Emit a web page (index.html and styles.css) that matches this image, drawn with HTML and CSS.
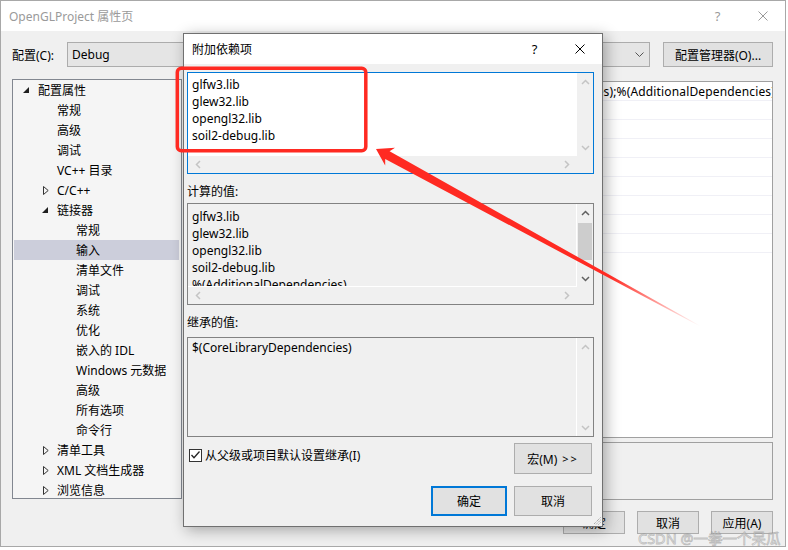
FILE: index.html
```html
<!DOCTYPE html>
<html lang="zh-CN">
<head>
    <meta charset="UTF-8">
    <meta name="viewport" content="width=device-width, initial-scale=1.0">
    <title>OpenGLProject 属性页</title>
    <link rel="stylesheet" href="styles.css">
</head>
<body>

    <div class="window">
        <div class="titlebar">
            <span class="title">OpenGLProject 属性页</span>
            <span class="cap-btn">?</span>
            <span class="cap-btn"><svg width="10" height="10" viewBox="0 0 10 10"><path d="M0.5 0.5 L9.5 9.5 M9.5 0.5 L0.5 9.5" stroke="currentColor" stroke-width="1" fill="none"/></svg></span>
        </div>

        <div class="client">
            <div class="config-row">
                <span class="config-label">配置(C):</span>
                <div class="combo">
                    <span class="combo-text">Debug</span>
                    <svg class="combo-arrow" width="9" height="5" viewBox="0 0 9 5"><polyline points="0.5,0.5 4.5,4.5 8.5,0.5" fill="none" stroke="#555" stroke-width="1"/></svg>
                </div>
                <button class="btn btn-manager">配置管理器(O)...</button>
            </div>

            <div class="main">
                <div class="tree">
                    <div class="node l0"><span class="tog open"></span>配置属性</div>
                    <div class="node l1"><span class="tog"></span>常规</div>
                    <div class="node l1"><span class="tog"></span>高级</div>
                    <div class="node l1"><span class="tog"></span>调试</div>
                    <div class="node l1"><span class="tog"></span>VC++ 目录</div>
                    <div class="node l1"><span class="tog closed"><svg width="6" height="9" viewBox="0 0 6 9"><polygon points="0.5,0.5 5.2,4.5 0.5,8.5" fill="none" stroke="#333" stroke-width="1"/></svg></span>C/C++</div>
                    <div class="node l1"><span class="tog open"></span>链接器</div>
                    <div class="node l2"><span class="tog"></span>常规</div>
                    <div class="node l2 selected"><span class="tog"></span>输入</div>
                    <div class="node l2"><span class="tog"></span>清单文件</div>
                    <div class="node l2"><span class="tog"></span>调试</div>
                    <div class="node l2"><span class="tog"></span>系统</div>
                    <div class="node l2"><span class="tog"></span>优化</div>
                    <div class="node l2"><span class="tog"></span>嵌入的 IDL</div>
                    <div class="node l2"><span class="tog"></span>Windows 元数据</div>
                    <div class="node l2"><span class="tog"></span>高级</div>
                    <div class="node l2"><span class="tog"></span>所有选项</div>
                    <div class="node l2"><span class="tog"></span>命令行</div>
                    <div class="node l1"><span class="tog closed"><svg width="6" height="9" viewBox="0 0 6 9"><polygon points="0.5,0.5 5.2,4.5 0.5,8.5" fill="none" stroke="#333" stroke-width="1"/></svg></span>清单工具</div>
                    <div class="node l1"><span class="tog closed"><svg width="6" height="9" viewBox="0 0 6 9"><polygon points="0.5,0.5 5.2,4.5 0.5,8.5" fill="none" stroke="#333" stroke-width="1"/></svg></span>XML 文档生成器</div>
                    <div class="node l1"><span class="tog closed"><svg width="6" height="9" viewBox="0 0 6 9"><polygon points="0.5,0.5 5.2,4.5 0.5,8.5" fill="none" stroke="#333" stroke-width="1"/></svg></span>浏览信息</div>
                </div>

                <div class="props">
                    <div class="grid">
                        <!-- property names sit under the dialog, only the value column shows -->
                        <div class="grid-row"><span class="prop-name"></span><span class="prop-value"><span>glfw3.lib;glew32.lib;opengl32.lib;soil2-debug.lib;$(CoreLibraryDependencies);%(AdditionalDependencies)</span></span></div>
                        <div class="grid-row"><span class="prop-name"></span><span class="prop-value"></span></div>
                        <div class="grid-row"><span class="prop-name"></span><span class="prop-value"></span></div>
                        <div class="grid-row"><span class="prop-name"></span><span class="prop-value"></span></div>
                        <div class="grid-row"><span class="prop-name"></span><span class="prop-value"></span></div>
                        <div class="grid-row"><span class="prop-name"></span><span class="prop-value"></span></div>
                        <div class="grid-row"><span class="prop-name"></span><span class="prop-value"></span></div>
                        <div class="grid-row"><span class="prop-name"></span><span class="prop-value"></span></div>
                        <div class="grid-row"><span class="prop-name"></span><span class="prop-value"></span></div>
                    </div>
                    <div class="desc"></div>
                </div>
            </div>

            <div class="footer">
                <button class="btn btn-foot">确定</button>
                <button class="btn btn-foot">取消</button>
                <button class="btn btn-foot">应用(A)</button>
            </div>
        </div>
    </div>

    <div class="dialog">
        <div class="dlg-title">
            <span class="title">附加依赖项</span>
            <span class="cap-btn">?</span>
            <span class="cap-btn"><svg width="10" height="10" viewBox="0 0 10 10"><path d="M0.5 0.5 L9.5 9.5 M9.5 0.5 L0.5 9.5" stroke="currentColor" stroke-width="1" fill="none"/></svg></span>
        </div>

        <div class="dlg-body">
            <div class="edit edit-active">
                <div class="edit-text pad-3">
                    <div>glfw3.lib</div>
                    <div>glew32.lib</div>
                    <div>opengl32.lib</div>
                    <div>soil2-debug.lib</div>
                </div>
                <div class="vscroll">
                    <span class="sb-btn"><svg width="9" height="6" viewBox="0 0 9 6"><polyline points="1,5 4.5,1.5 8,5" fill="none" stroke="#c4c4c4" stroke-width="1.5"/></svg></span>
                    <span class="sb-btn"><svg width="9" height="6" viewBox="0 0 9 6"><polyline points="1,1 4.5,4.5 8,1" fill="none" stroke="#c4c4c4" stroke-width="1.5"/></svg></span>
                </div>
                <div class="hscroll">
                    <span class="sb-btn"><svg width="6" height="9" viewBox="0 0 6 9"><polyline points="5,1 1.5,4.5 5,8" fill="none" stroke="#c4c4c4" stroke-width="1.5"/></svg></span>
                    <span class="sb-btn"><svg width="6" height="9" viewBox="0 0 6 9"><polyline points="1,1 4.5,4.5 1,8" fill="none" stroke="#c4c4c4" stroke-width="1.5"/></svg></span>
                </div>
                <div class="sb-corner"></div>
            </div>

            <div class="field-label label-computed">计算的值:</div>
            <div class="edit edit-readonly box-computed">
                <div class="edit-text pad-4">
                    <div>glfw3.lib</div>
                    <div>glew32.lib</div>
                    <div>opengl32.lib</div>
                    <div>soil2-debug.lib</div>
                    <div>%(AdditionalDependencies)</div>
                </div>
                <div class="vscroll">
                    <span class="sb-btn"><svg width="9" height="6" viewBox="0 0 9 6"><polyline points="1,5 4.5,1.5 8,5" fill="none" stroke="#606060" stroke-width="1.5"/></svg></span>
                    <span class="sb-thumb"></span>
                    <span class="sb-btn"><svg width="9" height="6" viewBox="0 0 9 6"><polyline points="1,1 4.5,4.5 8,1" fill="none" stroke="#606060" stroke-width="1.5"/></svg></span>
                </div>
                <div class="hscroll">
                    <span class="sb-btn"><svg width="6" height="9" viewBox="0 0 6 9"><polyline points="5,1 1.5,4.5 5,8" fill="none" stroke="#c4c4c4" stroke-width="1.5"/></svg></span>
                    <span class="sb-btn"><svg width="6" height="9" viewBox="0 0 6 9"><polyline points="1,1 4.5,4.5 1,8" fill="none" stroke="#c4c4c4" stroke-width="1.5"/></svg></span>
                </div>
                <div class="sb-corner"></div>
            </div>

            <div class="field-label label-inherited">继承的值:</div>
            <div class="edit edit-readonly edit-noh box-inherited">
                <div class="edit-text pad-1">
                    <div>$(CoreLibraryDependencies)</div>
                </div>
                <div class="vscroll">
                    <span class="sb-btn"><svg width="9" height="6" viewBox="0 0 9 6"><polyline points="1,5 4.5,1.5 8,5" fill="none" stroke="#c4c4c4" stroke-width="1.5"/></svg></span>
                    <span class="sb-btn"><svg width="9" height="6" viewBox="0 0 9 6"><polyline points="1,1 4.5,4.5 8,1" fill="none" stroke="#c4c4c4" stroke-width="1.5"/></svg></span>
                </div>
            </div>

            <div class="inherit-row">
                <label class="check">
                    <span class="check-box"><svg width="11" height="10" viewBox="0 0 11 10"><polyline points="1.5,5 4,7.8 9.5,1.5" fill="none" stroke="#222" stroke-width="1.3"/></svg></span>
                    从父级或项目默认设置继承(I)
                </label>
                <button class="btn btn-macro">宏(M) <span class="gt">&gt;&gt;</span></button>
            </div>

            <div class="dlg-buttons">
                <button class="btn btn-dlg btn-default">确定</button>
                <button class="btn btn-dlg">取消</button>
            </div>
        </div>

        <svg class="grip" width="8" height="8" viewBox="0 0 8 8">
            <path d="M7.5 0.5 L0.5 7.5 M7.5 3 L3 7.5 M7.5 5.5 L5.5 7.5" stroke="#8a8a8a" stroke-width="1" stroke-dasharray="1 1" fill="none"/>
        </svg>
    </div>

    <!-- annotation drawn over the screenshot -->
    <svg class="annot" width="788" height="550" viewBox="0 0 788 550">
        <defs>
            <linearGradient id="fade" gradientUnits="userSpaceOnUse" x1="376" y1="149" x2="700" y2="326">
                <stop offset="0" stop-color="#ff2a22" stop-opacity="1"/>
                <stop offset="0.72" stop-color="#ff2a22" stop-opacity="1"/>
                <stop offset="1" stop-color="#ff2a22" stop-opacity="0"/>
            </linearGradient>
        </defs>
        <rect x="177.3" y="68.3" width="188.5" height="82.5" rx="4" fill="none" stroke="#ff2a22" stroke-width="3.5"/>
        <polygon points="376,149 395,147.8 389.6,151.2 700.2,325.8 699.8,326.2 385.2,159.1 385.2,165.6" fill="url(#fade)"/>
    </svg>

    <div class="watermark">CSDN @一拳一个呆瓜</div>

</body>
</html>
```

FILE: styles.css
```css
* {
    box-sizing: border-box;
}

body {
    margin: 0;
    width: 788px;
    height: 550px;
    overflow: hidden;
    position: relative;
    background: #fff;
    font-family: "Noto Sans", "Noto Sans CJK SC", sans-serif;
    font-size: 12px;
    color: #000;
}

button {
    font-family: inherit;
    font-size: 12px;
    color: #000;
    padding: 0;
}

.btn {
    background: #e1e1e1;
    border: 1px solid #adadad;
    display: flex;
    align-items: center;
    justify-content: center;
}

/* ---------- main property window ---------- */

.window {
    width: 786px;
    height: 547px;
    border: 1px solid #a8a8a8;
    background: #f0f0f0;
    display: flex;
    flex-direction: column;
}

.titlebar {
    height: 30px;
    flex-shrink: 0;
    background: #fff;
    color: #9a9a9a;
    display: flex;
    align-items: center;
    padding-left: 8px;
}

.title {
    flex: 1;
}

.cap-btn {
    width: 45px;
    height: 30px;
    display: flex;
    align-items: center;
    justify-content: center;
    font-size: 13px;
}

.client {
    padding: 11px 12px 0 11px;
    display: flex;
    flex-direction: column;
}

.config-row {
    height: 25px;
    display: flex;
    align-items: center;
}

.config-label {
    width: 55px;
}

.combo {
    flex: 1;
    height: 25px;
    background: #e5e5e5;
    border: 1px solid #acacac;
    display: flex;
    align-items: center;
    padding: 0 4px;
}

.combo-text {
    flex: 1;
}

.combo-arrow {
    margin-right: 1px;
}

.btn-manager {
    width: 110px;
    height: 25px;
    margin-left: 13px;
}

.main {
    margin-top: 12px;
    height: 421px;
    display: flex;
    gap: 8px;
}

.tree {
    width: 170px;
    flex-shrink: 0;
    height: 420px;
    border: 1px solid #828790;
    background: #f5f5f5;
}

.node {
    height: 20px;
    display: flex;
    align-items: center;
    white-space: nowrap;
}

.node.l0 { padding-left: 9px; }
.node.l1 { padding-left: 28px; }
.node.l2 { padding-left: 47px; }

.node.selected {
    background: #cccedb;
    margin: 0 2px 0 1px;
    padding-left: 46px;
}

.tog {
    width: 16px;
    height: 20px;
    flex-shrink: 0;
    display: flex;
    align-items: center;
}

.tog.open::before {
    content: "";
    width: 0;
    height: 0;
    margin-left: 1px;
    border-style: solid;
    border-width: 0 0 6px 6px;
    border-color: transparent transparent #1e1e1e transparent;
}

.tog.closed svg {
    margin-left: 2px;
}

.props {
    flex: 1;
    min-width: 0;
    display: flex;
    flex-direction: column;
}

.grid {
    margin-top: 2px;
    height: 357px;
    background: #fff;
    border: 1px solid #a0a0a0;
}

.grid-row {
    height: 19px;
    border-bottom: 1px solid #f0f0f6;
    display: flex;
    align-items: center;
}

.prop-name {
    width: 230px;
    flex-shrink: 0;
}

.prop-value {
    flex: 1;
    min-width: 0;
    height: 18px;
    overflow: hidden;
    display: flex;
    justify-content: flex-end;
    align-items: center;
    white-space: nowrap;
}

.prop-value span {
    margin-right: -3px;
    letter-spacing: 0.15px;
}

.desc {
    margin-top: 4px;
    height: 58px;
    border: 1px solid #a0a0a0;
    background: #f0f0f0;
}

.footer {
    margin-top: 11px;
    display: flex;
    justify-content: flex-end;
    gap: 12px;
}

.btn-foot {
    width: 62px;
    height: 23px;
}

/* ---------- modal dialog ---------- */

.dialog {
    position: absolute;
    left: 183px;
    top: 33px;
    width: 420px;
    height: 494px;
    border: 1px solid #707070;
    background: #f0f0f0;
    box-shadow: 3px 3px 14px rgba(0, 0, 0, 0.32);
    display: flex;
    flex-direction: column;
}

.dlg-title {
    height: 30px;
    flex-shrink: 0;
    background: #fff;
    display: flex;
    align-items: center;
    padding-left: 8px;
}

.dlg-body {
    padding: 8px 8px 0 3px;
    display: flex;
    flex-direction: column;
}

.edit {
    height: 102px;
    display: grid;
    grid-template-columns: 1fr 16px;
    grid-template-rows: 1fr 17px;
    line-height: 17px;
}

.edit-active {
    border: 1px solid #0078d7;
}

.edit-active .edit-text {
    background: #fff;
}

.edit-readonly {
    border: 1px solid #828282;
    background: #f0f0f0;
}

.edit-readonly .edit-text {
    border-right: 1px solid #fff;
    border-bottom: 1px solid #fff;
}

.edit-noh {
    height: 100px;
    grid-template-rows: 1fr;
}

.edit-noh .edit-text {
    border-bottom: none;
}

.edit-text {
    padding-left: 4px;
    overflow: hidden;
    white-space: nowrap;
}

.pad-1 { padding-top: 1px; }
.pad-3 { padding-top: 3px; }
.pad-4 { padding-top: 4px; }

.vscroll {
    background: #f0f0f0;
    display: flex;
    flex-direction: column;
    justify-content: space-between;
}

.hscroll {
    background: #f0f0f0;
    display: flex;
    justify-content: space-between;
    padding: 0 2px;
}

.sb-btn {
    width: 16px;
    height: 17px;
    display: flex;
    align-items: center;
    justify-content: center;
}

.sb-thumb {
    margin: 2px 1px 0;
    height: 37px;
    background: #cdcdcd;
    flex-shrink: 0;
}

.box-computed .vscroll {
    justify-content: flex-start;
}

.box-computed .vscroll .sb-btn:last-child {
    margin-top: auto;
}

.sb-corner {
    background: #f0f0f0;
}

.field-label {
    line-height: 16px;
    height: 16px;
}

.label-computed {
    margin-top: 10px;
}

.box-computed {
    margin-top: 3px;
}

.label-inherited {
    margin-top: 10px;
}

.box-inherited {
    margin-top: 6px;
}

.inherit-row {
    margin-top: 6px;
    height: 31px;
    display: flex;
    align-items: flex-start;
}

.check {
    display: flex;
    align-items: center;
    margin-top: 4px;
    margin-left: 2px;
    height: 16px;
}

.check-box {
    width: 13px;
    height: 13px;
    border: 1px solid #333;
    background: #fff;
    margin-right: 3px;
    display: flex;
    align-items: center;
    justify-content: center;
}

.btn-macro {
    margin-left: auto;
    margin-right: 2px;
    width: 78px;
    height: 31px;
}

.gt {
    margin-left: 5px;
    font-size: 11px;
    letter-spacing: 2px;
}

.dlg-buttons {
    margin-top: 12px;
    margin-right: 2px;
    display: flex;
    justify-content: flex-end;
    gap: 7px;
}

.btn-dlg {
    width: 78px;
    height: 30px;
}

.btn-default {
    width: 76px;
    border: 2px solid #0078d7;
}

.grip {
    position: absolute;
    right: 1px;
    bottom: 1px;
}

/* ---------- overlays ---------- */

.annot {
    position: absolute;
    left: 0;
    top: 0;
    pointer-events: none;
}

.watermark {
    position: absolute;
    left: 638px;
    top: 527px;
    font-family: "Noto Sans", "Noto Sans CJK SC", sans-serif;
    font-size: 14.5px;
    color: rgba(255, 255, 255, 0.55);
    -webkit-text-stroke: 0.8px rgba(140, 140, 140, 0.55);
    white-space: nowrap;
    pointer-events: none;
}
```
